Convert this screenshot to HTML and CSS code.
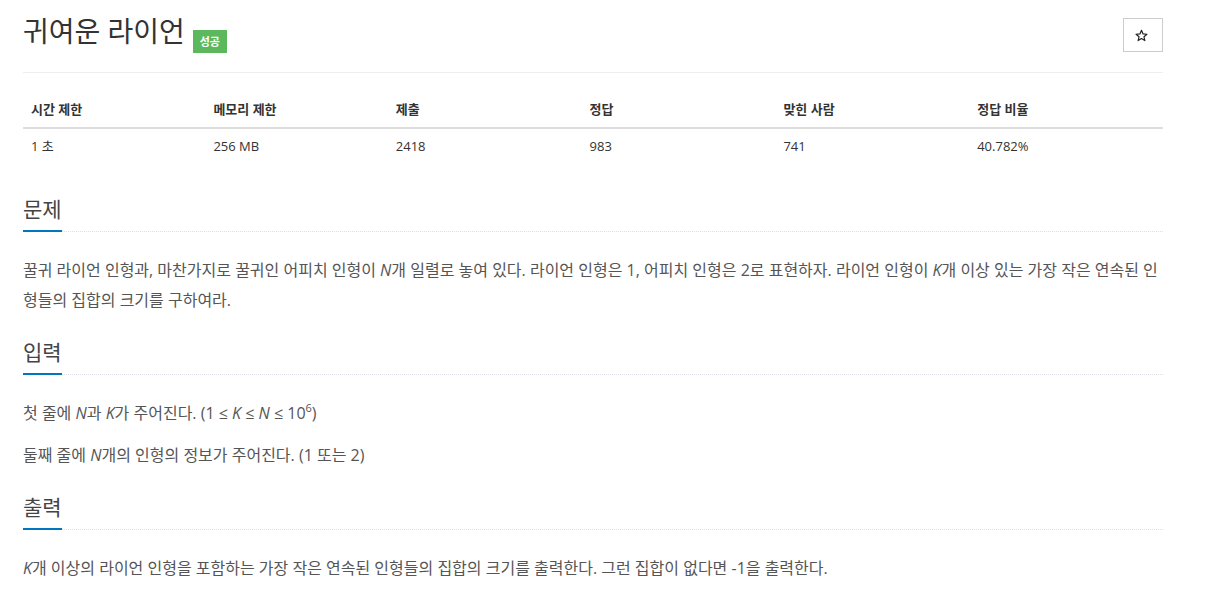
FILE: index.html
```html
<!DOCTYPE html>
<html lang="ko">
<head>
<meta charset="utf-8">
<title>귀여운 라이언</title>
<link rel="stylesheet" href="styles.css">
</head>
<body>
<div class="page">
  <header class="page-header">
    <div class="title-group">
      <h1 class="title">귀여운 라이언</h1>
      <span class="badge">성공</span>
    </div>
    <button class="star-btn" type="button" aria-label="즐겨찾기">
      <svg width="13" height="13" viewBox="0 0 24 24" fill="none" stroke="#222" stroke-width="2.2" stroke-linejoin="round"><path d="M12 2.5l2.9 6.6 7.1.6-5.4 4.7 1.6 7-6.2-3.7-6.2 3.7 1.6-7L2 9.7l7.1-.6z"/></svg>
    </button>
  </header>

  <table class="info">
    <thead>
      <tr>
        <th class="w16">시간 제한</th>
        <th class="w16">메모리 제한</th>
        <th class="w17">제출</th>
        <th class="w17">정답</th>
        <th class="w17">맞힌 사람</th>
        <th class="w17">정답 비율</th>
      </tr>
    </thead>
    <tbody>
      <tr>
        <td>1 초</td>
        <td>256 MB</td>
        <td>2418</td>
        <td>983</td>
        <td>741</td>
        <td>40.782%</td>
      </tr>
    </tbody>
  </table>

  <section class="section">
    <div class="headline"><h2>문제</h2></div>
    <div class="text">
      <p>꿀귀 라이언 인형과, 마찬가지로 꿀귀인 어피치 인형이 <i>N</i>개 일렬로 놓여 있다. 라이언 인형은 1, 어피치 인형은 2로 표현하자. 라이언 인형이 <i>K</i>개 이상 있는 가장 작은 연속된 인형들의 집합의 크기를 구하여라.</p>
    </div>
  </section>

  <section class="section">
    <div class="headline"><h2>입력</h2></div>
    <div class="text">
      <p>첫 줄에 <i>N</i>과 <i>K</i>가 주어진다. (1 ≤ <i>K</i> ≤ <i>N</i> ≤ 10<sup>6</sup>)</p>
      <p>둘째 줄에 <i>N</i>개의 인형의 정보가 주어진다. (1 또는 2)</p>
    </div>
  </section>

  <section class="section">
    <div class="headline"><h2>출력</h2></div>
    <div class="text">
      <p><i>K</i>개 이상의 라이언 인형을 포함하는 가장 작은 연속된 인형들의 집합의 크기를 출력한다. 그런 집합이 없다면 -1을 출력한다.</p>
    </div>
  </section>
</div>
</body>
</html>
```

FILE: styles.css
```css
* {
  box-sizing: border-box;
}

html, body {
  margin: 0;
  padding: 0;
  background: #fff;
}

body {
  font-family: "Open Sans", "Noto Sans CJK KR", sans-serif;
  font-size: 13px;
  color: #333;
}

.page {
  width: 1140px;
  margin-left: 23px;
}

.page-header {
  display: flex;
  justify-content: space-between;
  align-items: flex-start;
  height: 73px;
  border-bottom: 1px solid #eee;
}

.title-group {
  display: flex;
  align-items: flex-start;
}

.title {
  margin: 15px 0 0 0;
  font-size: 28px;
  line-height: 32px;
  font-weight: 400;
  color: #333;
}

.badge {
  margin: 30px 0 0 8px;
  width: 34px;
  height: 23px;
  background: #5cb85c;
  color: #fff;
  font-size: 11px;
  font-weight: 700;
  line-height: 23px;
  text-align: center;
}

.star-btn {
  margin-top: 18px;
  width: 40px;
  height: 34px;
  padding: 0;
  border: 1px solid #ccc;
  background: #fff;
  display: flex;
  align-items: center;
  justify-content: center;
}

.star-btn svg {
  display: block;
  margin-left: -3px;
}

.info {
  width: 100%;
  margin-top: 19px;
  border-collapse: collapse;
  table-layout: fixed;
}

.info th,
.info td {
  padding: 8px;
  text-align: left;
  line-height: 18.5px;
  font-size: 13px;
  color: #333;
}

.info th {
  font-weight: 700;
  border-bottom: 2px solid #ddd;
}

.w16 { width: 16%; }
.w17 { width: 17%; }

.section {
  margin-top: 31px;
}

.section + .section {
  margin-top: 22px;
}

.headline {
  display: flex;
  border-bottom: 1px dotted #dcdfe4;
  margin-bottom: 23px;
}

.headline h2 {
  margin: 0 0 -1px 0;
  padding-bottom: 6px;
  font-size: 21px;
  line-height: 30px;
  font-weight: 400;
  color: #444;
  border-bottom: 2px solid #0076c0;
}

.text p {
  margin: 0 0 12px 0;
  font-size: 16px;
  line-height: 30px;
  color: #555;
}

.text sup {
  font-size: 11px;
  line-height: 0;
  vertical-align: 7px;
}
```
